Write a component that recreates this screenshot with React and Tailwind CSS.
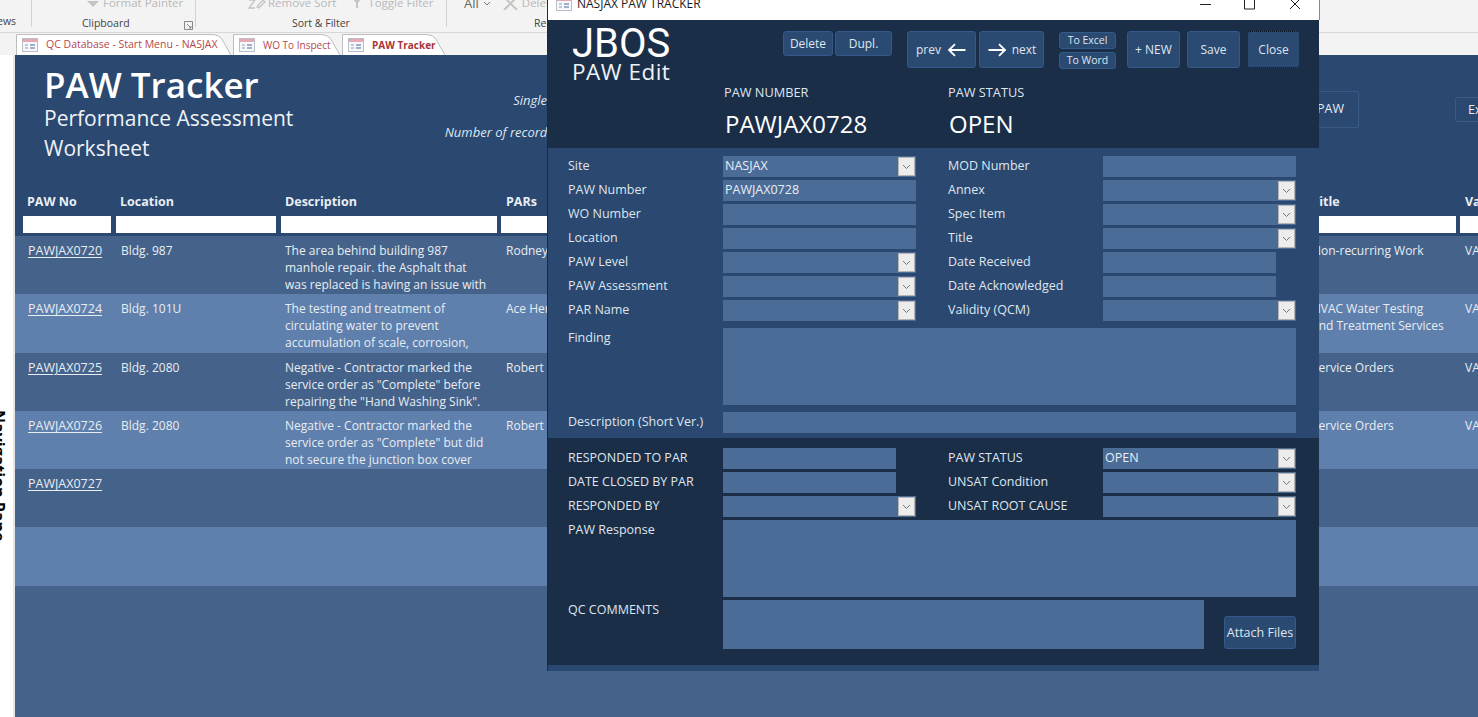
import React from "react";

const F = "font-['Open_Sans','Noto_Sans',sans-serif]";

function FormIcon({ className = "" }) {
  return (
    <svg width="16" height="14" viewBox="0 0 16 14" className={className}>
      <rect x="0.5" y="0.5" width="15" height="13" fill="#f7f8fb" stroke="#b9bfc9" />
      <rect x="1" y="1" width="14" height="3" fill="#e6a9b3" />
      <path d="M3 7h3M3 10h3" stroke="#8b9ab0" strokeWidth="1.2" />
      <rect x="8" y="6" width="5" height="2" fill="#9fb0c8" />
      <rect x="8" y="9" width="5" height="2" fill="#9fb0c8" />
    </svg>
  );
}

function Tab({ w, label, active, small }) {
  return (
    <div className={`relative h-[24px] shrink-0 flex items-center pl-[6px] ${active ? "font-bold text-[#a8343a]" : "text-[#b4474d]"}`} style={{ width: w }}>
      <svg width={w} height="24" className="absolute left-0 top-0">
        <path d={`M0.5 24 V1.5 H${w - 22} Q${w - 13} 1.5 ${w - 10} 8 L${w - 1} 24`} fill="#ffffff" stroke="#bdbdbd" />
      </svg>
      <FormIcon className="relative" />
      <span className={`relative ml-[8px] whitespace-nowrap ${small ? "text-[10px]" : "text-[10.5px]"}`}>{label}</span>
    </div>
  );
}

function Ribbon() {
  return (
    <div className="h-[32px] bg-[#f3f3f3] text-[#5e5e5e] text-[10px] relative overflow-hidden flex">
      <div className="w-[32px] border-r border-[#d2d2d2] h-[27px] flex items-end shrink-0"><span className="ml-[-3px] mb-[-3px] text-[#444] text-[10.5px]">ews</span></div>
      <div className="w-[164px] border-r border-[#d2d2d2] h-[27px] flex flex-col justify-between shrink-0 relative">
        <div className="mt-[-6px] pl-[54px] text-[#b8b8b8] text-[11.5px] whitespace-nowrap flex items-center gap-[3px]">
          <svg width="14" height="10" viewBox="0 0 14 10"><path d="M1 3h12L7 9z" fill="#c4c4c4" /></svg>
          <span>Format Painter</span>
        </div>
        <div className="pl-[50px] mb-[-3px] text-[#444] text-[10.5px] leading-[14px]">Clipboard</div>
        <svg width="9" height="9" viewBox="0 0 9 9" className="absolute right-[2px] bottom-[-3px]"><path d="M0.5 0.5h8v8h-8zM3 3l4 4M5 7h2v-2" fill="none" stroke="#888" /></svg>
      </div>
      <div className="w-[251px] border-r border-[#d2d2d2] h-[27px] flex flex-col justify-between shrink-0">
        <div className="mt-[-6px] pl-[52px] text-[#b8b8b8] text-[11.5px] whitespace-nowrap flex items-center">
          <svg width="18" height="12" viewBox="0 0 18 12" className="mr-[2px]"><path d="M1 3h6L1 11h6M9 10l6-7 2 2-6 6z" fill="none" stroke="#c4c4c4" strokeWidth="1.3" /></svg>
          <span>Remove Sort</span>
          <svg width="10" height="12" viewBox="0 0 10 12" className="ml-[16px] mr-[6px]"><path d="M1 2h8L6 6v5H4V6z" fill="#c4c4c4" /></svg>
          <span>Toggle Filter</span>
        </div>
        <div className="pl-[96px] mb-[-3px] text-[#444] text-[10.5px] leading-[14px]">Sort & Filter</div>
      </div>
      <div className="flex flex-col justify-between h-[27px] pl-[17px]">
        <div className="mt-[-6px] text-[#666] text-[13px] leading-[18px] whitespace-nowrap flex items-center">
          <span>All</span>
          <svg width="8" height="5" viewBox="0 0 8 5" className="ml-[4px]"><path d="M1 1l3 3 3-3" fill="none" stroke="#777" /></svg>
          <svg width="15" height="13" viewBox="0 0 15 13" className="ml-[12px]"><path d="M1 0l13 13M14 0L1 13" stroke="#c4c4c4" strokeWidth="2" /></svg>
          <span className="ml-[4px] text-[11.5px] text-[#b8b8b8]">Delete</span>
        </div>
        <div className="pl-[70px] mb-[-3px] text-[#444] text-[10.5px] leading-[14px]">Records</div>
      </div>
    </div>
  );
}

const rows = [
  { no: "PAWJAX0720", loc: "Bldg. 987", desc: "The area behind building 987 manhole repair. the Asphalt that was replaced is having an issue with settling", par: "Rodney", title: "Non-recurring Work", v: "VALID" },
  { no: "PAWJAX0724", loc: "Bldg. 101U", desc: "The testing and treatment of circulating water to prevent accumulation of scale, corrosion, and growth", par: "Ace Herman", title: "HVAC Water Testing and Treatment Services", v: "VALID" },
  { no: "PAWJAX0725", loc: "Bldg. 2080", desc: 'Negative - Contractor marked the service order as "Complete" before repairing the "Hand Washing Sink".', par: "Robert", title: "Service Orders", v: "VALID" },
  { no: "PAWJAX0726", loc: "Bldg. 2080", desc: 'Negative - Contractor marked the service order as "Complete" but did not secure the junction box cover', par: "Robert", title: "Service Orders", v: "VALID" },
  { no: "PAWJAX0727", loc: "", desc: "", par: "", title: "", v: "" },
  { no: "", loc: "", desc: "", par: "", title: "", v: "" },
];

function Tracker() {
  return (
    <div className="flex-1 min-w-0 bg-[#45638a] flex flex-col overflow-hidden">
      <div className="bg-[#2a4870] h-[181px] shrink-0 flex flex-col">
        <div className="h-[137px] flex shrink-0">
          <div className="w-[340px] shrink-0 pl-[29px] text-white">
            <div className="text-[35px] leading-[40px] mt-[10px] font-semibold whitespace-nowrap">PAW Tracker</div>
            <div className="text-[21px] leading-[30px] mt-[-2px] text-[#eef2f7] whitespace-nowrap">Performance Assessment</div>
            <div className="text-[21px] leading-[30px] text-[#eef2f7]">Worksheet</div>
          </div>
          <div className="w-[198px] shrink-0 italic text-[13px] leading-[18px] text-[#dfe6ef] text-right pt-[36px] whitespace-nowrap">
            <div className="pr-[6px]">Single</div>
            <div className="mt-[14px]">Number of records</div>
          </div>
          <div className="ml-[749px] mt-[36px] w-[57px] h-[37px] shrink-0 rounded-[2px] border border-[#375a86] text-[#e6ebf2] text-[12.5px] flex items-center justify-center">PAW</div>
          <div className="ml-[96px] mt-[42px] w-[60px] h-[25px] shrink-0 rounded-[2px] border border-[#375a86] text-[#e6ebf2] text-[12.5px] pl-[12px] leading-[23px]">Export</div>
        </div>
        <div className="h-[20px] flex text-[12.5px] font-bold text-[#e9eef5] items-center pl-[12px] shrink-0">
          <span className="w-[93px] shrink-0">PAW No</span>
          <span className="w-[165px] shrink-0">Location</span>
          <span className="w-[221px] shrink-0">Description</span>
          <span className="w-[806px] shrink-0">PARs</span>
          <span className="w-[153px] shrink-0">Title</span>
          <span className="w-[60px] shrink-0">Validity</span>
        </div>
        <div className="h-[17px] flex gap-[4px] pl-[8px] mt-[4px] shrink-0">
          <div className="w-[88px] bg-white shrink-0" />
          <div className="w-[160px] ml-[1px] bg-white shrink-0" />
          <div className="w-[216px] ml-[1px] bg-white shrink-0" />
          <div className="w-[955px] bg-white shrink-0" />
          <div className="w-[60px] bg-white shrink-0" />
        </div>
      </div>
      {rows.map((r, i) => (
        <div key={i} className={`h-[58.3px] shrink-0 flex pl-[13px] pt-[6px] text-[12px] leading-[17px] text-[#e8edf4] overflow-hidden ${i % 2 ? "bg-[#5f80ac]" : "bg-[#45638a]"}`}>
          <span className="w-[93px] shrink-0 text-[12.5px] underline underline-offset-2">{r.no}</span>
          <span className="w-[164px] shrink-0">{r.loc}</span>
          <span className="w-[221px] shrink-0 pr-[16px] h-[51px] overflow-hidden">{r.desc}</span>
          <span className="w-[806px] shrink-0">{r.par}</span>
          <span className="w-[153px] shrink-0 pr-[18px]">{r.title}</span>
          <span className="w-[60px] shrink-0">{r.v}</span>
        </div>
      ))}
    </div>
  );
}

function Arrow({ left }) {
  return (
    <svg width="20" height="14" viewBox="0 0 20 14" className={left ? "" : "rotate-180"}>
      <path d="M18.5 7H2M8 1.2 2 7l6 5.8" fill="none" stroke="#ffffff" strokeWidth="1.8" />
    </svg>
  );
}

const btn = "rounded-[3px] bg-[#2b4a72] border border-[#335a8a] text-[#dfe6ef] flex items-center justify-center shrink-0";

function Toolbar() {
  return (
    <div className="flex h-[37px] mt-[11px] pl-[59px] text-[12px]">
      <button className={`${btn} w-[50px] h-[25px] text-[12px]`}>Delete</button>
      <button className={`${btn} w-[57px] h-[25px] ml-[2px] text-[12px]`}>Dupl.</button>
      <button className={`${btn} w-[69px] h-[37px] ml-[15px] gap-[6px]`}>prev <Arrow left /></button>
      <button className={`${btn} w-[65px] h-[37px] ml-[3px] gap-[5px]`}><Arrow /> next</button>
      <div className="flex flex-col gap-[3px] ml-[15px] w-[57px] shrink-0 pt-[1px]">
        <button className={`${btn} h-[17px] text-[10.5px]`}>To Excel</button>
        <button className={`${btn} h-[17px] text-[10.5px]`}>To Word</button>
      </div>
      <button className={`${btn} w-[53px] h-[37px] ml-[11px]`}>+ NEW</button>
      <button className={`${btn} w-[53px] h-[37px] ml-[7px]`}>Save</button>
      <button className={`${btn} w-[53px] h-[37px] ml-[7px] border-dotted border-[#0b1626]!`}>Close</button>
    </div>
  );
}

function Chevron() {
  return (
    <span className="absolute right-[1px] top-[1px] bottom-[1px] w-[17px] bg-[#ececec] border border-[#b5b5b5] flex items-center justify-center">
      <svg width="9" height="6" viewBox="0 0 9 6"><path d="M1 1l3.5 3.5L8 1" fill="none" stroke="#777" strokeWidth="1" /></svg>
    </span>
  );
}

function Field({ label, value, combo, w = 193, h = 21 }) {
  return (
    <div className="flex items-start w-[348px] shrink-0">
      <div className="w-[155px] shrink-0 text-[12.5px] leading-[19px] text-[#dfe6ef] whitespace-nowrap">{label}</div>
      <div className="relative bg-[#4b6c96] text-[12.5px] leading-[20px] pl-[2px] text-[#e8edf4] shrink-0" style={{ width: w, height: h }}>
        {value}
        {combo && <Chevron />}
      </div>
    </div>
  );
}

function Pair({ a, b }) {
  return (
    <div className="flex gap-[32px]">
      <Field {...a} />
      <Field {...b} />
    </div>
  );
}

function Wide({ label, h, w = 573, children }) {
  return (
    <div className="flex items-start">
      <div className="w-[155px] shrink-0 text-[12.5px] leading-[19px] text-[#dfe6ef] whitespace-nowrap">{label}</div>
      <div className="bg-[#4b6c96] shrink-0" style={{ width: w, height: h }} />
      {children}
    </div>
  );
}

function Modal() {
  return (
    <div className="absolute left-[547px] top-0 w-[772px] h-[671px] border-l border-[#1a2a40] flex flex-col">
      <div className="h-[20px] bg-white relative shrink-0 flex items-start overflow-hidden border-r border-[#8a8a8a] w-[772px]">
        <FormIcon className="ml-[8px] mt-[-3px]" />
        <span className="ml-[5px] mt-[-4px] text-[12px] leading-[16px] text-[#1a1a1a] whitespace-nowrap">NASJAX PAW TRACKER</span>
        <svg width="110" height="20" viewBox="0 0 110 20" className="absolute left-[650px] top-0">
          <path d="M2 4.5h11" stroke="#222" />
          <path d="M46.5 -2h10v11h-10z" fill="none" stroke="#222" />
          <path d="M92 -1l10 10M102 -1l-10 10" stroke="#222" />
        </svg>
      </div>
      <div className="h-[128px] bg-[#1b2e48] flex shrink-0">
        <div className="w-[176px] shrink-0 pl-[24px] text-white">
          <div className="font-['Roboto',sans-serif] text-[40px] leading-[40px] mt-[4px]">JBOS</div>
          <div className="text-[22.5px] leading-[26px] mt-[-5px] text-[#eef2f7] tracking-[0.5px]">PAW Edit</div>
        </div>
        <div className="flex-1 flex flex-col">
          <Toolbar />
          <div className="flex mt-[16px]">
            <div className="w-[224px] shrink-0">
              <div className="text-[12.75px] leading-[17px] text-[#dfe6ef]">PAW NUMBER</div>
              <div className="text-[24px] leading-[30px] mt-[8px] pl-[1px] text-white">PAWJAX0728</div>
            </div>
            <div>
              <div className="text-[12.75px] leading-[17px] text-[#dfe6ef]">PAW STATUS</div>
              <div className="text-[24px] leading-[30px] mt-[8px] pl-[1px] text-white">OPEN</div>
            </div>
          </div>
        </div>
      </div>
      <div className="h-[290px] bg-[#2a4870] pl-[20px] pt-[8px] flex flex-col gap-[3px] shrink-0">
        <Pair a={{ label: "Site", value: "NASJAX", combo: true }} b={{ label: "MOD Number" }} />
        <Pair a={{ label: "PAW Number", value: "PAWJAX0728" }} b={{ label: "Annex", combo: true }} />
        <Pair a={{ label: "WO Number" }} b={{ label: "Spec Item", combo: true }} />
        <Pair a={{ label: "Location" }} b={{ label: "Title", combo: true }} />
        <Pair a={{ label: "PAW Level", combo: true }} b={{ label: "Date Received", w: 173 }} />
        <Pair a={{ label: "PAW Assessment", combo: true }} b={{ label: "Date Acknowledged", w: 173 }} />
        <Pair a={{ label: "PAR Name", combo: true }} b={{ label: "Validity (QCM)", combo: true }} />
        <div className="mt-[4px] flex flex-col gap-[7px]">
          <Wide label="Finding" h={77} />
          <Wide label="Description (Short Ver.)" h={21} />
        </div>
      </div>
      <div className="h-[227px] bg-[#1b2e48] pl-[20px] pt-[10px] flex flex-col gap-[3px] shrink-0">
        <Pair a={{ label: "RESPONDED TO PAR", w: 173 }} b={{ label: "PAW STATUS", value: "OPEN", combo: true }} />
        <Pair a={{ label: "DATE CLOSED BY PAR", w: 173 }} b={{ label: "UNSAT Condition", combo: true }} />
        <Pair a={{ label: "RESPONDED BY", combo: true }} b={{ label: "UNSAT ROOT CAUSE", combo: true }} />
        <Wide label="PAW Response" h={77} />
        <Wide label="QC COMMENTS" h={49} w={481}>
          <button className={`${btn} w-[72px] h-[33px] ml-[20px] mt-[16px] text-[12.5px] pt-[1px]`}>Attach Files</button>
        </Wide>
      </div>
      <div className="flex-1 bg-[#2a4870]" />
    </div>
  );
}

export default function App() {
  return (
    <div className={`relative w-[1478px] h-[717px] overflow-hidden bg-[#f3f3f3] ${F}`}>
      <Ribbon />
      <div className="h-[23px] flex pl-[16px] bg-[#f3f3f3] border-t border-[#d8d8d8] overflow-hidden">
        <Tab w={217} label="QC Database - Start Menu - NASJAX" />
        <Tab w={109} label="WO To Inspect" small />
        <Tab w={105} label="PAW Tracker" active small />
      </div>
      <div className="h-[662px] flex">
        <div className="w-[15px] shrink-0 bg-white border-r-[2px] border-[#e6e6e6] relative overflow-hidden">
          <span className="absolute left-[-12px] top-[355px] text-[16px] leading-[21px] font-bold text-black whitespace-nowrap [writing-mode:vertical-rl]">Navigation Pane</span>
        </div>
        <Tracker />
      </div>
      <Modal />
    </div>
  );
}
